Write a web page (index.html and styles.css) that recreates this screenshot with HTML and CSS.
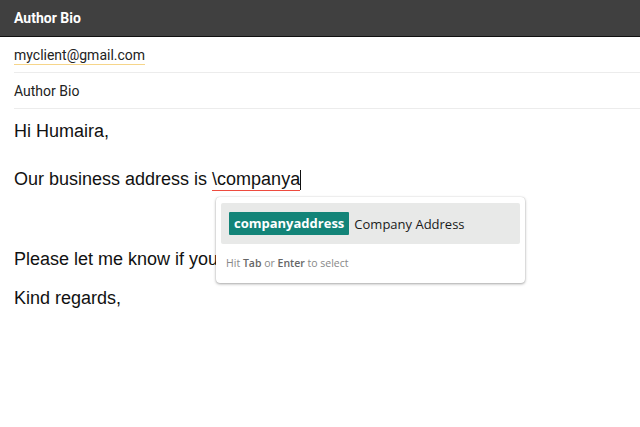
FILE: index.html
```html
<!DOCTYPE html>
<html>
<head>
<meta charset="utf-8">
<link rel="stylesheet" href="styles.css">
</head>
<body>
<div class="app">
  <header class="topbar">Author Bio</header>
  <div class="field"><span class="email">myclient@gmail.com</span></div>
  <div class="field">Author Bio</div>
  <div class="body">
    <p class="l1">Hi Humaira,</p>
    <p class="l2">Our business address is <span class="typed">\companya</span><span class="caret"></span></p>
    <p class="l3">Please let me know if you</p>
    <p class="l4">Kind regards,</p>
    <div class="popup">
      <div class="option">
        <span class="badge">companyaddress</span>
        <span class="label">Company Address</span>
      </div>
      <div class="hint">Hit <b>Tab</b> or <b>Enter</b> to select</div>
    </div>
  </div>
</div>
</body>
</html>
```
FILE: styles.css
```css
* { box-sizing: border-box; }
html, body { margin: 0; padding: 0; background: #fff; }
.app { width: 640px; height: 427px; overflow: hidden; position: relative; }
.topbar {
  height: 37px;
  background: #404040;
  border-bottom: 1px solid #111;
  color: #fff;
  font-family: Roboto, "Liberation Sans", sans-serif;
  font-weight: 700;
  font-size: 14px;
  line-height: 36px;
  padding-left: 14px;
}
.field {
  margin-left: 14px;
  height: 36px;
  border-bottom: 1px solid #ececec;
  font-family: Roboto, "Liberation Sans", sans-serif;
  font-size: 14px;
  color: #222;
  line-height: 36px;
}
.email { border-bottom: 1px solid #f6d58a; padding-bottom: 1px; }
.body {
  position: relative;
  padding: 10px 14px 0;
  font-family: "Liberation Sans", Arial, sans-serif;
  font-size: 18px;
  color: #111;
}
.body p { margin: 0; line-height: 24px; }
.l1 { height: 48px; }
.l2 { height: 80px; }
.l3 { height: 39px; }
.typed { border-bottom: 1.5px solid #ee4b3f; padding-bottom: 1px; }
.caret { display: inline-block; width: 1px; height: 20px; background: #111; vertical-align: -5px; }
.popup {
  position: absolute;
  left: 216px;
  top: 88px;
  width: 309px;
  height: 86px;
  background: #fff;
  border-radius: 4px;
  box-shadow: 0 1px 3px rgba(0,0,0,0.35), 0 0 1px rgba(0,0,0,0.2);
  padding: 6px 5px;
  font-family: "Open Sans", sans-serif;
}
.option {
  height: 41px;
  background: #e8e9e8;
  border-radius: 2px;
  display: flex;
  align-items: center;
  padding-left: 8px;
  gap: 5px;
}
.badge {
  background: #138478;
  color: #fff;
  font-weight: 700;
  font-size: 13px;
  height: 23px;
  line-height: 23px;
  padding: 0 5px;
  border-radius: 1px;
}
.label { font-size: 13px; color: #1a1a1a; }
.hint {
  font-size: 10.5px;
  color: #888;
  padding: 12px 0 0 5px;
}
.hint b { color: #666; font-weight: 600; }
```
